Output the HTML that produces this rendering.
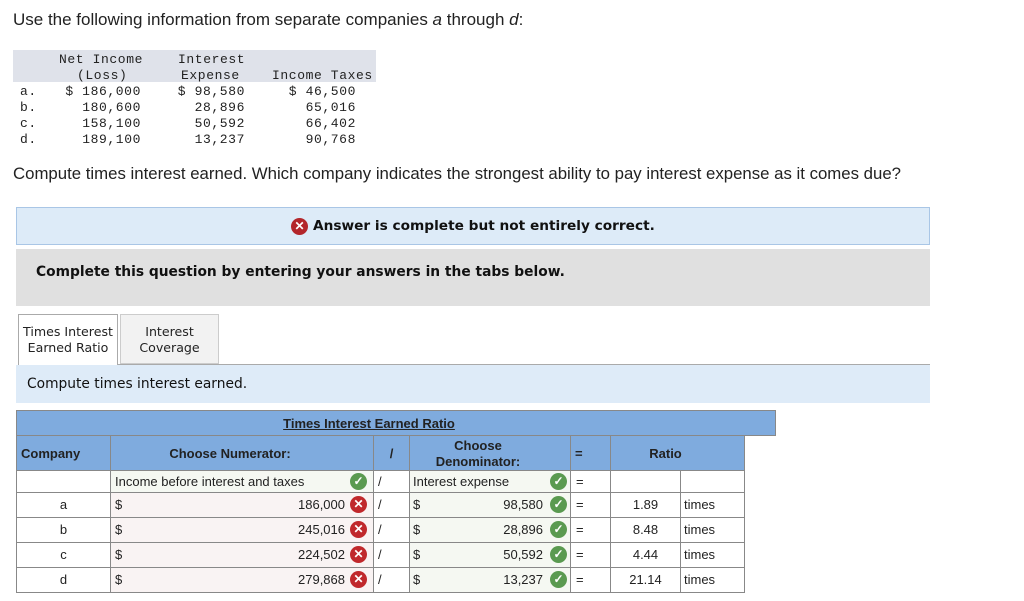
<!DOCTYPE html>
<html><head><meta charset="utf-8"><style>
*{margin:0;padding:0;box-sizing:border-box}
body{width:1024px;height:601px;background:#fff;position:relative;font-family:"Liberation Sans",Arial,sans-serif;color:#222;overflow:hidden}
.a{position:absolute}
.m{position:absolute;font-family:"Liberation Mono",monospace;font-size:13px;letter-spacing:0.6px;color:#222;white-space:pre;line-height:16px}
.r{text-align:right}
.c{position:absolute;border:1px solid #888;font-size:13px;line-height:20px;white-space:nowrap;overflow:hidden}
.ic{display:inline-block;width:17px;height:17px;border-radius:50%;color:#fff;font-size:12px;line-height:17px;text-align:center;font-weight:bold;position:absolute;top:2px}
.ok{background:#5a9a50}
.no{background:#c0282c}
.hd{background:#7fabde;font-weight:bold;font-size:13px;color:#222}
</style></head><body>
<div class="a" style="left:13px;top:10px;font-size:17px">Use the following information from separate companies <i>a</i> through <i>d</i>:</div>
<div class="a" style="left:13px;top:50px;width:363px;height:32px;background:#dfe2ea"></div>
<div class="m" style="left:20px;top:84px">a.
b.
c.
d.</div>
<div class="m" style="left:59px;top:52px">Net Income</div>
<div class="m" style="left:77px;top:68px">(Loss)</div>
<div class="m r" style="left:40px;top:84px;width:101px">$ 186,000
180,600
158,100
189,100</div>
<div class="m" style="left:178px;top:52px">Interest</div>
<div class="m" style="left:181px;top:68px">Expense</div>
<div class="m r" style="left:150px;top:84px;width:95px">$ 98,580
28,896
50,592
13,237</div>
<div class="m" style="left:272px;top:68px">Income Taxes</div>
<div class="m r" style="left:260px;top:84px;width:96px">$ 46,500
65,016
66,402
90,768</div>
<div class="a" style="left:13px;top:164px;font-size:16.8px">Compute times interest earned. Which company indicates the strongest ability to pay interest expense as it comes due?</div>
<div class="a" style="left:16px;top:207px;width:914px;height:38px;background:#ddebf8;border:1px solid #a9c6e6"></div>
<div class="a" style="left:291px;top:218px;width:17px;height:17px;border-radius:50%;background:#b3262b;color:#fff;font-size:12px;line-height:17px;text-align:center;font-weight:bold">✕</div>
<div class="a" style="left:313px;top:218px;font-family:'DejaVu Sans',sans-serif;font-weight:bold;font-size:13.7px;color:#111">Answer is complete but not entirely correct.</div>
<div class="a" style="left:16px;top:249px;width:914px;height:57px;background:#e0e0e0"></div>
<div class="a" style="left:36px;top:264px;font-family:'DejaVu Sans',sans-serif;font-weight:bold;font-size:13.8px;color:#111">Complete this question by entering your answers in the tabs below.</div>
<div class="a" style="left:18px;top:314px;width:100px;height:52px;border:1px solid #aaa;border-bottom:none;background:#fff;text-align:center;font-family:'DejaVu Sans',sans-serif;font-size:12.6px;line-height:16px;padding-top:9px">Times Interest<br>Earned Ratio</div>
<div class="a" style="left:120px;top:314px;width:99px;height:50px;border:1px solid #ccc;background:#f2f2f2;text-align:center;font-family:'DejaVu Sans',sans-serif;font-size:12.6px;line-height:16px;padding-top:9px">Interest<br>Coverage</div>
<div class="a" style="left:117px;top:364px;width:813px;height:1px;background:#aaa"></div>
<div class="a" style="left:16px;top:365px;width:914px;height:38px;background:#deebf8"></div>
<div class="a" style="left:27px;top:376px;font-family:'DejaVu Sans',sans-serif;font-size:13.8px;color:#111">Compute times interest earned.</div>

<div class="c hd" style="left:16px;top:410px;width:760px;height:26px;line-height:26px;text-align:center;padding-right:54px"><u>Times Interest Earned Ratio</u></div>
<div class="c hd" style="left:16px;top:435px;width:95px;height:36px;line-height:35px;padding-left:4px">Company</div>
<div class="c hd" style="left:110px;top:435px;width:264px;height:36px;line-height:35px;text-align:center;padding-right:24px">Choose Numerator:</div>
<div class="c hd" style="left:373px;top:435px;width:37px;height:36px;line-height:35px;text-align:center">/</div>
<div class="c hd" style="left:409px;top:435px;width:162px;height:36px;line-height:16px;text-align:center;padding-top:2px;padding-right:24px">Choose<br>Denominator:</div>
<div class="c hd" style="left:570px;top:435px;width:41px;height:36px;line-height:35px;padding-left:4px">=</div>
<div class="c hd" style="left:610px;top:435px;width:135px;height:36px;line-height:35px;text-align:center;padding-right:24px">Ratio</div>

<div class="c" style="left:16px;top:470px;width:95px;height:23px"></div>
<div class="c" style="left:110px;top:470px;width:264px;height:23px;line-height:22px;background:#f5f8f2;padding-left:4px">Income before interest and taxes<span class="ic ok" style="left:239px">✓</span></div>
<div class="c" style="left:373px;top:470px;width:37px;height:23px;line-height:22px;padding-left:4px">/</div>
<div class="c" style="left:409px;top:470px;width:162px;height:23px;line-height:22px;background:#f5f8f2;padding-left:3px">Interest expense<span class="ic ok" style="left:140px">✓</span></div>
<div class="c" style="left:570px;top:470px;width:41px;height:23px;line-height:22px;padding-left:5px">=</div>
<div class="c" style="left:610px;top:470px;width:71px;height:23px"></div>
<div class="c" style="left:680px;top:470px;width:65px;height:23px"></div>

<div id="rows"></div>
<script>
var d=[["a","186,000","98,580","1.89"],["b","245,016","28,896","8.48"],["c","224,502","50,592","4.44"],["d","279,868","13,237","21.14"]];
var h="";
d.forEach(function(r,i){var t=492+i*25,H=26;
h+='<div class="c" style="left:16px;top:'+t+'px;width:95px;height:'+H+'px;line-height:24px;text-align:center">'+r[0]+'</div>';
h+='<div class="c" style="left:110px;top:'+t+'px;width:264px;height:'+H+'px;line-height:24px;background:#f9f3f3;padding-left:4px">$<span style="position:absolute;right:28px">'+r[1]+'</span><span class="ic no" style="left:239px;top:3px">✕</span></div>';
h+='<div class="c" style="left:373px;top:'+t+'px;width:37px;height:'+H+'px;line-height:24px;padding-left:4px">/</div>';
h+='<div class="c" style="left:409px;top:'+t+'px;width:162px;height:'+H+'px;line-height:24px;background:#f5f8f2;padding-left:3px">$<span style="position:absolute;right:27px">'+r[2]+'</span><span class="ic ok" style="left:140px;top:3px">✓</span></div>';
h+='<div class="c" style="left:570px;top:'+t+'px;width:41px;height:'+H+'px;line-height:24px;padding-left:5px">=</div>';
h+='<div class="c" style="left:610px;top:'+t+'px;width:71px;height:'+H+'px;line-height:24px;text-align:center">'+r[3]+'</div>';
h+='<div class="c" style="left:680px;top:'+t+'px;width:65px;height:'+H+'px;line-height:24px;padding-left:3px">times</div>';
});
document.getElementById("rows").innerHTML=h;
</script>
</body></html>
